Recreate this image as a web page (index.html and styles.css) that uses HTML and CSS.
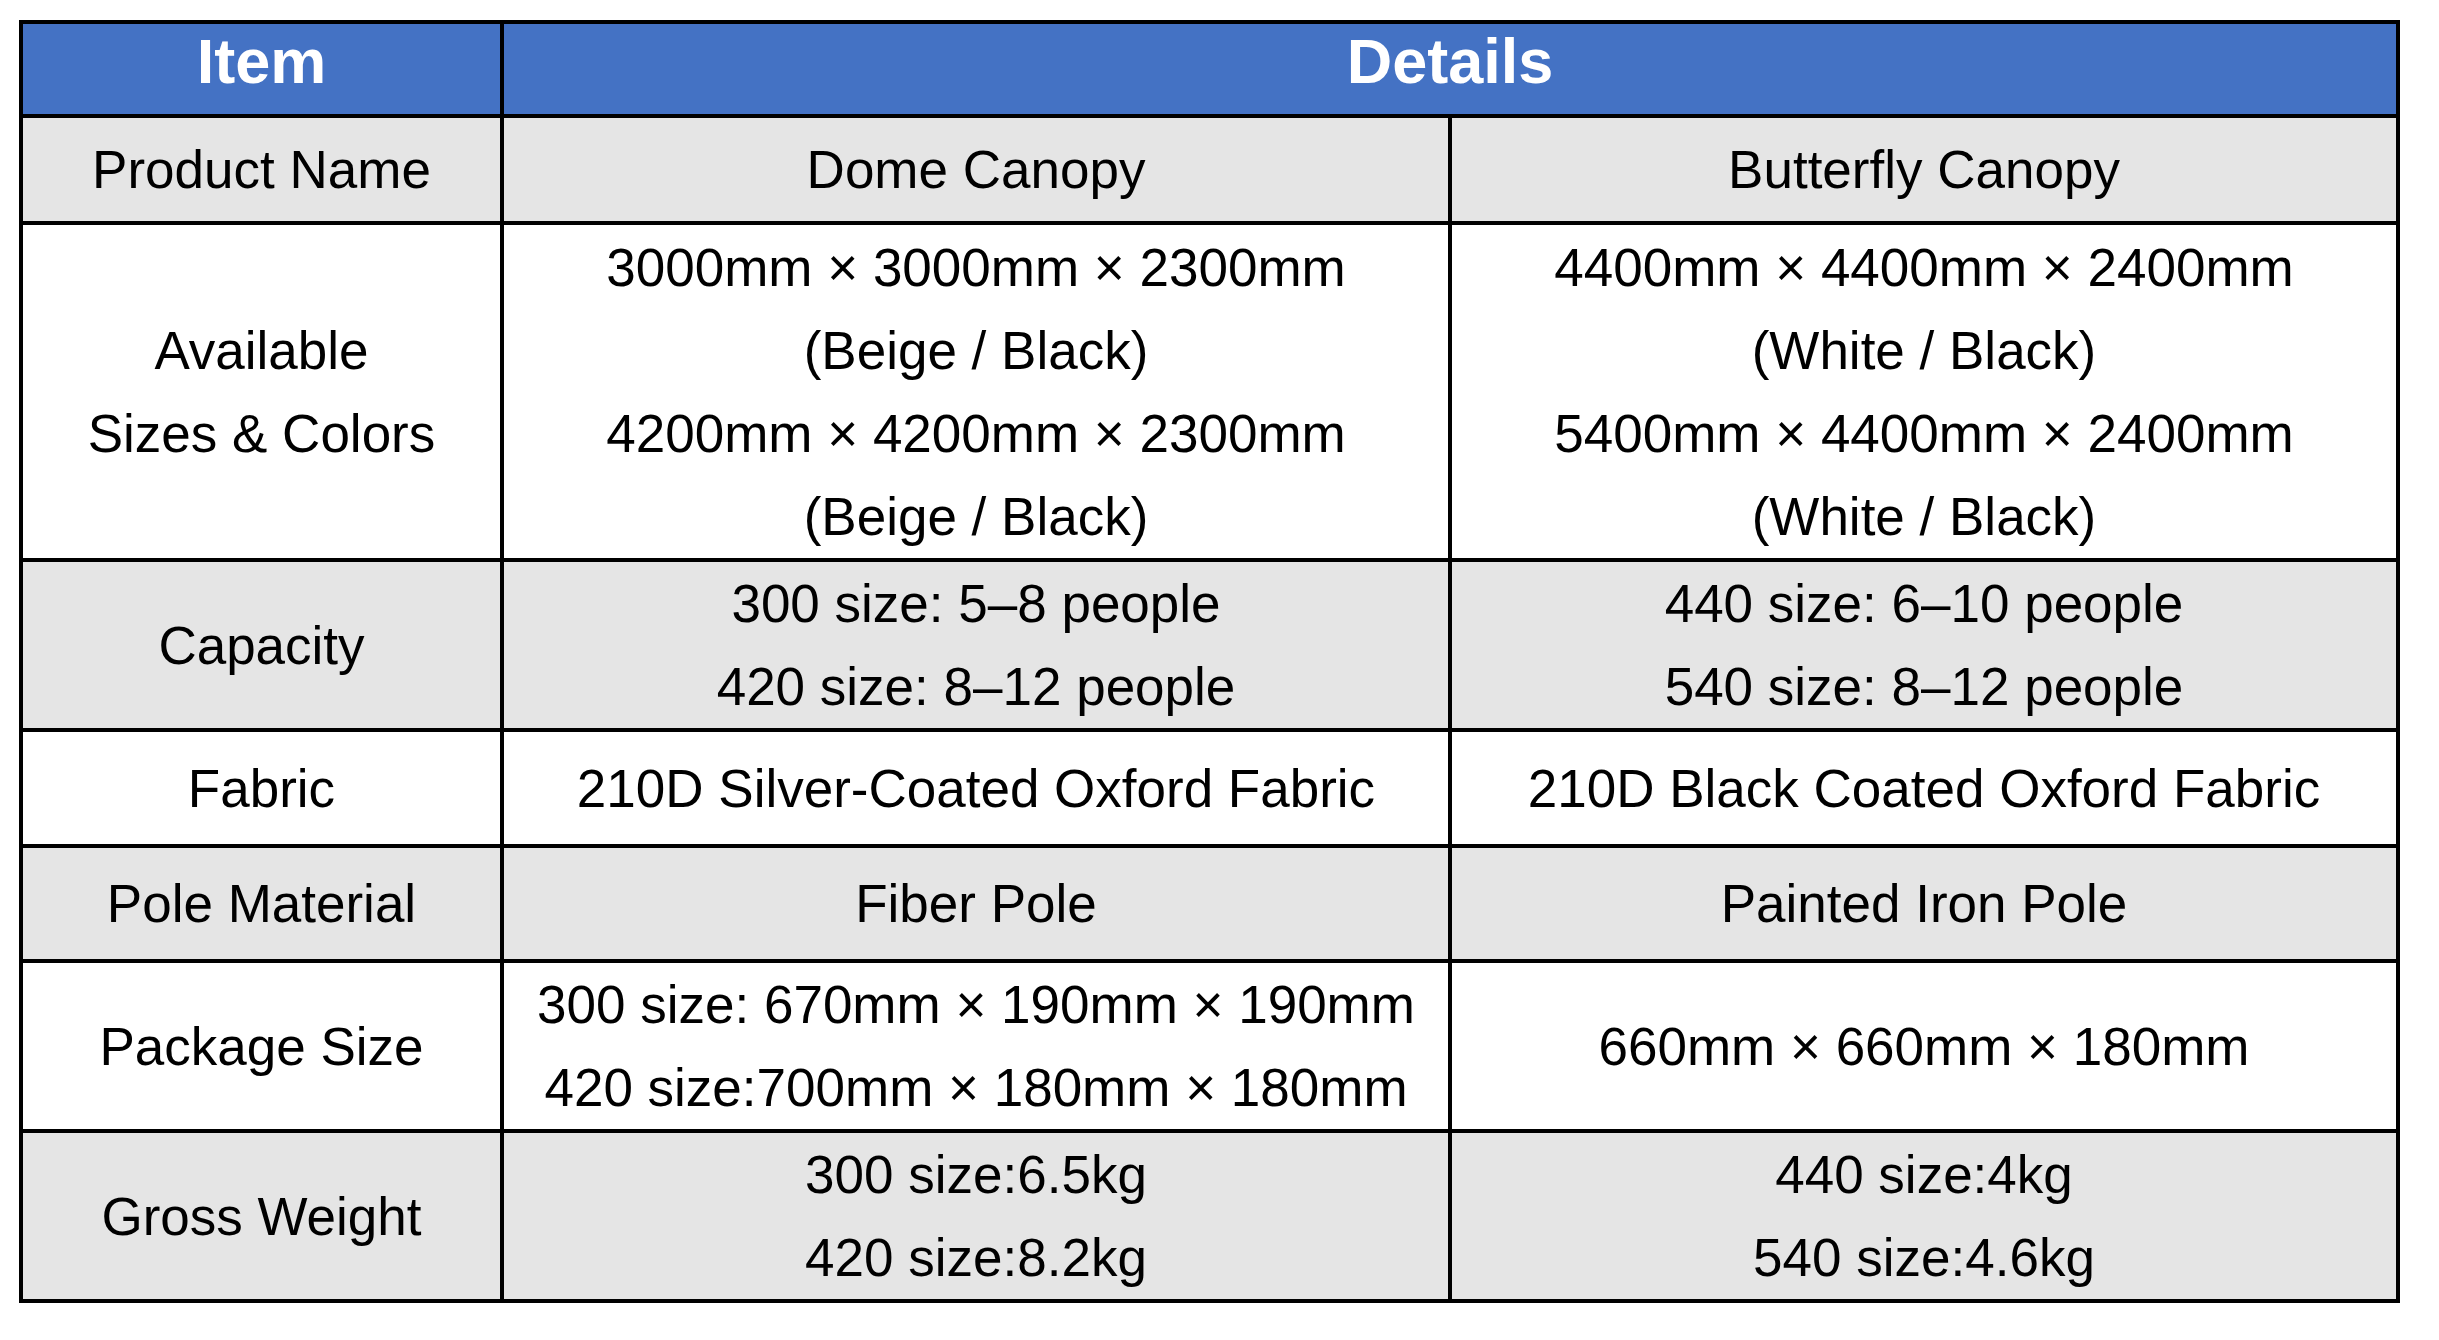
FILE: index.html
```html
<!DOCTYPE html>
<html lang="en">
<head>
<meta charset="utf-8">
<title>Canopy Specifications</title>
<link rel="stylesheet" href="styles.css">
</head>
<body>
<div class="spec-table">
  <div class="cell head">Item</div>
  <div class="cell head span2">Details</div>

  <div class="cell gray">Product Name</div>
  <div class="cell gray">Dome Canopy</div>
  <div class="cell gray">Butterfly Canopy</div>

  <div class="cell"><span>Available</span><span>Sizes &amp; Colors</span></div>
  <div class="cell"><span>3000mm × 3000mm × 2300mm</span><span>(Beige / Black)</span><span>4200mm × 4200mm × 2300mm</span><span>(Beige / Black)</span></div>
  <div class="cell"><span>4400mm × 4400mm × 2400mm</span><span>(White / Black)</span><span>5400mm × 4400mm × 2400mm</span><span>(White / Black)</span></div>

  <div class="cell gray">Capacity</div>
  <div class="cell gray"><span>300 size: 5–8 people</span><span>420 size: 8–12 people</span></div>
  <div class="cell gray"><span>440 size: 6–10 people</span><span>540 size: 8–12 people</span></div>

  <div class="cell">Fabric</div>
  <div class="cell">210D Silver-Coated Oxford Fabric</div>
  <div class="cell">210D Black Coated Oxford Fabric</div>

  <div class="cell gray">Pole Material</div>
  <div class="cell gray">Fiber Pole</div>
  <div class="cell gray">Painted Iron Pole</div>

  <div class="cell">Package Size</div>
  <div class="cell"><span>300 size: 670mm × 190mm × 190mm</span><span>420 size:700mm × 180mm × 180mm</span></div>
  <div class="cell">660mm × 660mm × 180mm</div>

  <div class="cell gray">Gross Weight</div>
  <div class="cell gray"><span>300 size:6.5kg</span><span>420 size:8.2kg</span></div>
  <div class="cell gray"><span>440 size:4kg</span><span>540 size:4.6kg</span></div>
</div>
</body>
</html>
```

FILE: styles.css
```css
html, body {
  margin: 0;
  padding: 0;
  background: #ffffff;
}

body {
  padding: 20px 0 0 19px;
}

.spec-table {
  display: grid;
  grid-template-columns: 477px 944px 944px;
  grid-template-rows: 90px 103px 333px 166px 112px 111px 166px 166px;
  gap: 4px;
  padding: 4px;
  background: #000000;
  width: max-content;
}

.cell {
  display: flex;
  flex-direction: column;
  justify-content: center;
  align-items: center;
  text-align: center;
  background: #ffffff;
  color: #000000;
  font-family: "Liberation Sans", Arial, sans-serif;
  font-size: 53px;
  line-height: 83px;
  white-space: nowrap;
}

.cell span {
  display: block;
}

.gray {
  background: #e5e5e5;
}

.head {
  background: #4472c4;
  color: #ffffff;
  font-weight: bold;
  font-size: 63px;
  line-height: 72px;
  padding-bottom: 16px;
  box-sizing: border-box;
}

.span2 {
  grid-column: span 2;
}
```
